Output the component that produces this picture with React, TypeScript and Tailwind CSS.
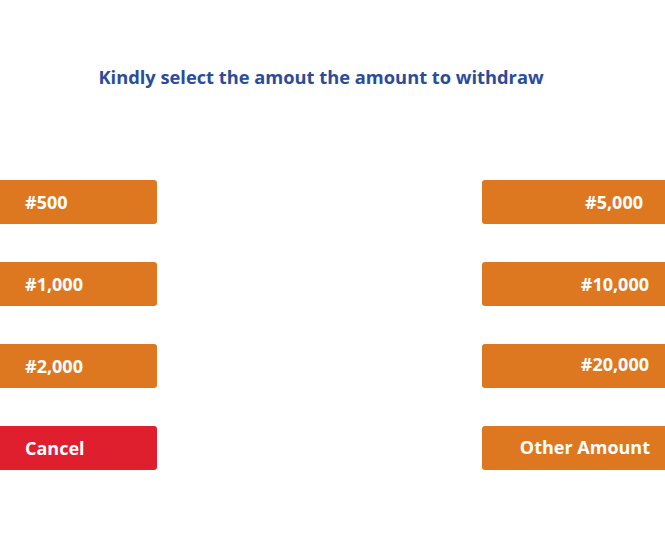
import React from "react";

const font = { fontFamily: "'Open Sans', Lato, sans-serif" };

function Btn({ label, side, red, pr, dy }: { label: string; side: "left" | "right"; red?: boolean; pr?: string; dy?: string }) {
  const base =
    "h-[44px] flex items-center text-white font-bold text-[18px] " +
    (red ? "bg-[#e01f2e] " : "bg-[#de7820] ");
  if (side === "left") {
    return <div className={base + "w-[157px] pl-[25px] rounded-r-[3px]"}>{label}</div>;
  }
  return (
    <div className={base + "w-[183px] justify-end rounded-l-[3px] " + (pr ?? "pr-[21px]")}>
      <span className={dy ?? ""}>{label}</span>
    </div>
  );
}

export default function App() {
  const rows: { l: string; r: string; red?: boolean; pr: string; dy?: string }[] = [
    { l: "#500", r: "#5,000", pr: "pr-[22px]" },
    { l: "#1,000", r: "#10,000", pr: "pr-[16px]" },
    { l: "#2,000", r: "#20,000", pr: "pr-[16px]", dy: "-mt-[4px]" },
    { l: "Cancel", r: "Other Amount", red: true, pr: "pr-[15px]", dy: "-mt-[2px]" },
  ];
  return (
    <div className="w-[665px] h-[549px] bg-white overflow-hidden" style={font}>
      <div className="pt-[65px] h-[24px] box-content text-center text-[18.3px] leading-[24px] font-bold text-[#2b4c9b] pr-[23px]">
        Kindly select the amout the amount to withdraw
      </div>
      <div className="mt-[91px] flex flex-col gap-[38px]">
        {rows.map((row) => (
          <div key={row.l} className="flex justify-between">
            <Btn label={row.l} side="left" red={row.red} />
            <Btn label={row.r} side="right" pr={row.pr} dy={row.dy} />
          </div>
        ))}
      </div>
    </div>
  );
}
